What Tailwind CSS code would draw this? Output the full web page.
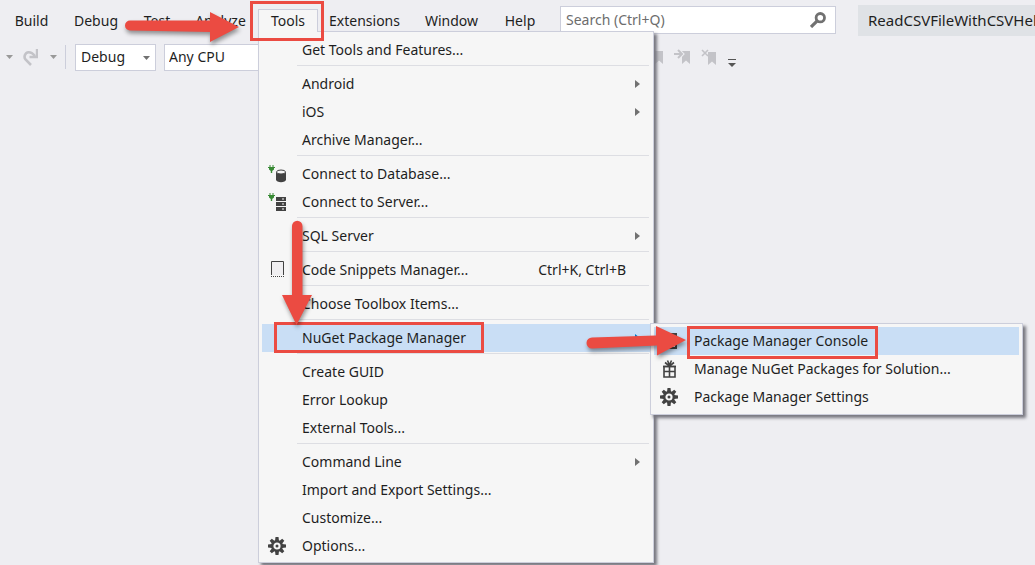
<!DOCTYPE html>
<html lang="en">
<head>
<meta charset="utf-8">
<title>ReadCSVFileWithCSVHelper</title>
<script src="https://cdn.jsdelivr.net/npm/@tailwindcss/browser@4"></script>
</head>
<body class="relative min-h-screen overflow-hidden bg-[#eeeef2] font-['Noto_Sans',sans-serif] text-sm text-[#1e1e1e]">

<svg class="hidden" aria-hidden="true">
  <symbol id="gear" viewBox="0 0 18 18">
    <g fill="#424242"><path d="M7.500 0h3l.5 4H7zM7.500 18h3l.5-4H7zM0 7.500v3l4 .5V7zM18 7.500v3l-4 .5V7zM1.700 3.800l2.100-2.100 3.200 2.500-2.800 2.800zM16.300 3.800l-2.100-2.100L11 4.200 13.800 7zM1.700 14.200l2.100 2.100L7 13.800 4.200 11zM16.300 14.200l-2.100 2.100-3.200-2.500 2.800-2.800z"/></g>
    <circle cx="9" cy="9" r="4.800" fill="#f6f6f6" stroke="#424242" stroke-width="2.400"/>
    <circle cx="9" cy="9" r="1.500" fill="#424242"/>
  </symbol>
  <symbol id="plug" viewBox="0 0 7 8"><path d="M1.500 0h1v2h2V0h1v2H7v1H6v1.500L4.200 6v2H2.800V6L1 4.500V3H0V2h1.500z" fill="#388a34"/></symbol>
  <symbol id="right" viewBox="0 0 5 8"><path d="M0 0l5 4-5 4z" fill="#717171"/></symbol>
  <symbol id="down" viewBox="0 0 7 4"><path d="M0 0h7L3.500 4z"/></symbol>
  <symbol id="mark" viewBox="0 0 8 13"><path d="M0 0h8v13L4 9.500 0 13z" fill="#c3c3c8"/></symbol>
</svg>

<header>
  <div class="flex h-10 items-start">
    <nav class="flex pt-[9px] pl-[2px] *:h-[23px] *:shrink-0 *:text-center" aria-label="Main menu">
      <button class="w-[59px]">Build</button>
      <button class="w-[70px]">Debug</button>
      <button class="w-[52px]">Test</button>
      <button class="w-[75px]">Analyze</button>
      <button class="relative z-20 w-[60px] border border-b-0 border-[#cccedb] bg-[#f6f6f6]" aria-expanded="true">Tools</button>
      <button class="w-[93px]">Extensions</button>
      <button class="w-[81px]">Window</button>
      <button class="w-[56px]">Help</button>
    </nav>
    <label class="relative mt-[6px] ml-3 flex h-7 w-[276px] shrink-0 items-center border border-[#cccedb] bg-white">
      <span class="sr-only">Search</span>
      <input class="w-full bg-transparent px-[5px] outline-none placeholder:text-[#6d6d6d]" type="search" placeholder="Search (Ctrl+Q)">
      <svg class="mr-[9px] size-4 shrink-0" viewBox="0 0 16 16" fill="none" stroke="#717171"><circle cx="10.300" cy="5.700" r="4.200" stroke-width="2.800"/><path d="M7.200 8.800L1 15" stroke-width="3.200"/></svg>
    </label>
    <div class="mt-[5px] ml-[22px] flex h-[31px] min-w-0 flex-1 items-center overflow-hidden bg-[#dfe2e6] pl-[10px] text-[15px] whitespace-nowrap">ReadCSVFileWithCSVHelper</div>
  </div>
  <div class="flex h-8 items-center pt-[2px] pl-[6px]">
    <button aria-label="Undo history"><svg class="h-1 w-[7px] fill-[#999]"><use href="#down"/></svg></button>
    <button class="ml-[10px]" aria-label="Redo"><svg class="h-[17px] w-[15px]" viewBox="0 0 15 17" fill="none" stroke="#c3c3c8"><path d="M8 16L2.500 10.500C.5 8 2 3.500 5.500 3.200 8.500 3 10 4.500 12 7" stroke-width="2.600"/><path d="M14 0v8H6.500" stroke-width="2.400"/></svg></button>
    <button class="ml-3" aria-label="Redo history"><svg class="h-1 w-[7px] fill-[#999]"><use href="#down"/></svg></button>
    <div class="ml-2 h-6 w-px bg-[#cccedb]"></div>
    <div class="relative ml-[9px]">
      <select class="h-[27px] w-[81px] appearance-none border border-[#cccedb] bg-white pl-[5px]" aria-label="Configuration"><option>Debug</option></select>
      <svg class="pointer-events-none absolute top-3 right-[6px] h-1 w-[7px] fill-[#717171]"><use href="#down"/></svg>
    </div>
    <select class="ml-2 h-[27px] w-[110px] appearance-none border border-[#cccedb] bg-white pl-1" aria-label="Platform"><option>Any CPU</option></select>
    <button class="ml-[373px] flex" aria-label="Previous bookmark"><svg class="h-[17px] w-4"><use href="#mark" x="8" y="2" width="8" height="13"/></svg></button>
    <button class="ml-[11px]" aria-label="Next bookmark"><svg class="h-[17px] w-4"><use href="#mark" x="8" y="2" width="8" height="13"/><path d="M0 5h7M4 1l4 4-4 4" fill="none" stroke="#eeeef2" stroke-width="4"/><path d="M0 5h7M4 1l4 4-4 4" fill="none" stroke="#c3c3c8" stroke-width="2"/></svg></button>
    <button class="ml-[11px]" aria-label="Clear bookmarks"><svg class="h-[17px] w-4"><use href="#mark" x="7" y="3" width="8" height="13"/><path d="M1 1l6 6M7 1L1 7" stroke="#c3c3c8" stroke-width="1.600"/></svg></button>
    <button class="mt-3 ml-[11px]" aria-label="Toolbar options"><svg class="h-2 w-[9px] fill-[#555]"><path d="M0 0h8v1H0zM0 4h8L4 8z"/></svg></button>
  </div>
</header>

<div role="menu" aria-label="Tools" class="absolute top-[31px] left-[258px] z-10 w-[396px] border border-[#cccedb] bg-[#f6f6f6] px-[3px] pt-1 pb-[2px] shadow-[3px_3px_3px_#77777f] [&_button]:flex [&_button]:h-7 [&_button]:w-full [&_button]:items-center [&_button]:pr-[10px] [&_button]:text-left [&_button]:whitespace-nowrap [&_hr]:mt-px [&_hr]:mr-[1px] [&_hr]:mb-1 [&_hr]:ml-[35px] [&_hr]:border-[#dddee3] [&_span]:flex-1 [&_i]:flex [&_i]:w-10 [&_i]:shrink-0 [&_i]:pl-[6px]">
  <button role="menuitem"><i></i><span>Get Tools and Features...</span></button>
  <hr>
  <button role="menuitem"><i></i><span>Android</span><svg class="h-2 w-[5px]"><use href="#right"/></svg></button>
  <button role="menuitem"><i></i><span>iOS</span><svg class="h-2 w-[5px]"><use href="#right"/></svg></button>
  <button role="menuitem"><i></i><span>Archive Manager...</span></button>
  <hr>
  <button role="menuitem"><i><svg class="h-[18px] w-[19px]" viewBox="0 0 19 18"><use href="#plug" width="7" height="8"/><path d="M8 7v7.500c0 3.500 10 3.500 10 0V7z" fill="#424242"/><ellipse cx="13" cy="7" rx="4.500" ry="2" fill="#f6f6f6" stroke="#424242"/></svg></i><span>Connect to Database...</span></button>
  <button role="menuitem"><i><svg class="h-[18px] w-[19px]" viewBox="0 0 19 18"><use href="#plug" width="7" height="8"/><path d="M8 4h10v4H8zM8 9h10v4H8zM8 14h10v4H8z" fill="#424242"/><path d="M14 5.500h2v1h-2zM14 10.500h2v1h-2zM14 15.500h2v1h-2z" fill="#f6f6f6"/></svg></i><span>Connect to Server...</span></button>
  <hr>
  <button role="menuitem"><i></i><span>SQL Server</span><svg class="h-2 w-[5px]"><use href="#right"/></svg></button>
  <hr>
  <button role="menuitem"><i><svg class="ml-[2px] h-[18px] w-[15px]" viewBox="0 0 15 18" fill="none" stroke="#424242"><path d="M1.500 14V.5h12V14" fill="#f0eff1"/><path d="M1 15.500h14" stroke-dasharray="1 1"/></svg></i><span>Code Snippets Manager...</span><kbd class="pr-[14px] font-['Noto_Sans',sans-serif] text-sm">Ctrl+K, Ctrl+B</kbd></button>
  <hr>
  <button role="menuitem"><i></i><span>Choose Toolbox Items...</span></button>
  <hr>
  <div class="relative">
    <button role="menuitem" aria-expanded="true" class="bg-[#c9def5]"><i></i><span>NuGet Package Manager</span><svg class="h-2 w-[5px]" viewBox="0 0 5 8"><path d="M0 0l5 4-5 4z" fill="#007acc"/></svg></button>
    <div role="menu" aria-label="NuGet Package Manager" class="absolute -top-px left-full w-[373px] border border-[#cccedb] bg-[#f6f6f6] p-[3px] shadow-[3px_3px_3px_#77777f]">
      <button role="menuitem" class="bg-[#c9def5]"><i><svg class="h-4 w-[17px]" viewBox="0 0 17 16"><path d="M1 1h15v14H1z" fill="#f6f6f6" stroke="#424242" stroke-width="2"/><path d="M1 3h15" stroke="#424242" stroke-width="3"/></svg></i><span>Package Manager Console</span></button>
      <button role="menuitem"><i><svg class="ml-[2px] h-[18px] w-[15px]" viewBox="0 0 15 18" fill="none" stroke="#424242" stroke-width="1.600"><path d="M2 6.500h11V17H2zM7.500 6v11M2 11.500h11"/><path d="M1 6.500h13M7.500 6L3 2.500M7.500 6L12 2.500M5.500.5l2 4.500 2-4.500"/></svg></i><span>Manage NuGet Packages for Solution...</span></button>
      <button role="menuitem"><i><svg class="size-[18px]"><use href="#gear"/></svg></i><span>Package Manager Settings</span></button>
    </div>
  </div>
  <hr>
  <button role="menuitem"><i></i><span>Create GUID</span></button>
  <button role="menuitem"><i></i><span>Error Lookup</span></button>
  <button role="menuitem"><i></i><span>External Tools...</span></button>
  <hr>
  <button role="menuitem"><i></i><span>Command Line</span><svg class="h-2 w-[5px]"><use href="#right"/></svg></button>
  <button role="menuitem"><i></i><span>Import and Export Settings...</span></button>
  <button role="menuitem"><i></i><span>Customize...</span></button>
  <button role="menuitem"><i><svg class="size-[18px]"><use href="#gear"/></svg></i><span>Options...</span></button>
</div>

<!-- Tutorial callouts drawn over the interface -->
<svg class="pointer-events-none absolute top-0 left-0 z-30 h-[565px] w-[1035px]" viewBox="0 0 1035 565" aria-hidden="true">
  <g fill="none" stroke="#eb4b42" stroke-width="3">
    <path d="M251.500 2.500h71v37h-71zM275.500 323.500h207v28h-207zM688.500 327.500h188v30h-188z"/>
  </g>
  <g fill="#eb4b42" class="drop-shadow-[1px_3px_2px_rgba(0,0,0,0.4)]">
    <path d="M130 20.500L210 20.500V12L239 27 210 42V32L130 30.500a5 5 0 0 1 0-10z"/>
    <path d="M292 226a5 5 0 0 1 10.500 0V295H312L296.500 325 282 295h10z"/>
    <path d="M592 337.500L656 335.500V326L686 340 657 355.500V345.500L592 348.500a5.500 5.500 0 0 1 0-11z"/>
  </g>
</svg>
</body>
</html>
